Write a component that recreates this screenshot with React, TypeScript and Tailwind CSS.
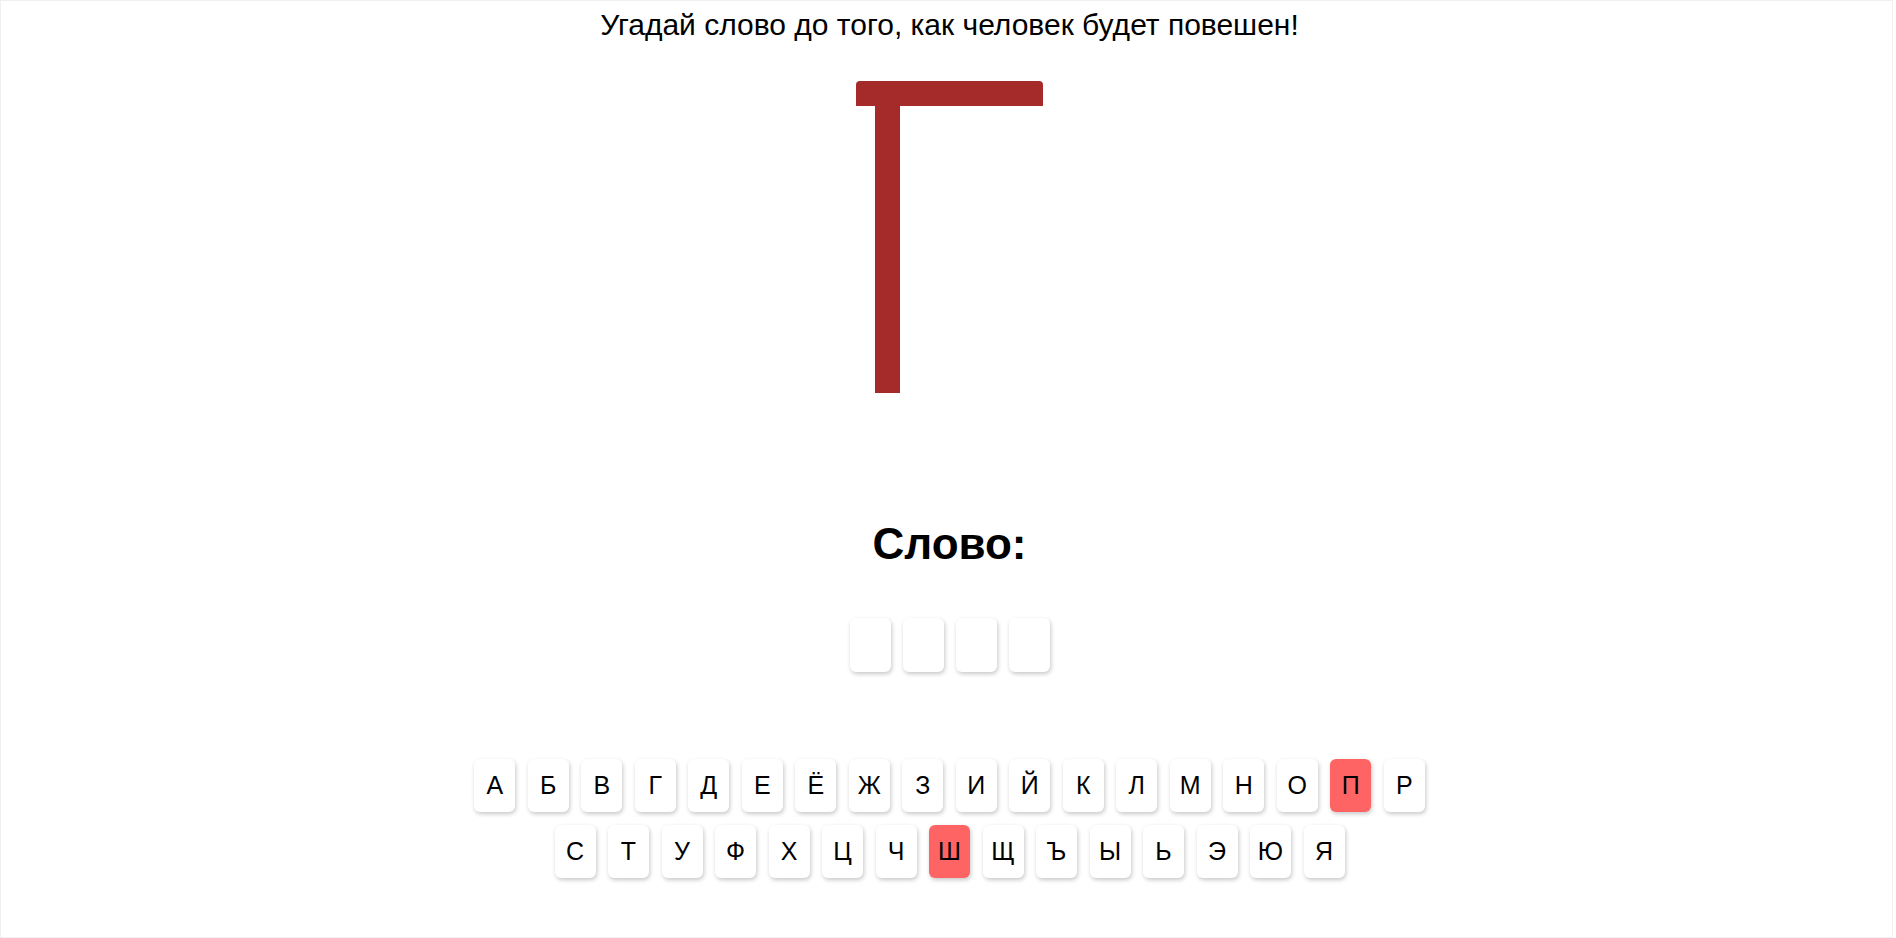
import React, { useState } from 'react';

const ROW_LETTERS = 'АБВГДЕЁЖЗИЙКЛМНОПРСТУФХЦЧШЩЪЫЬЭЮЯ'.split('');

const Gallows = () => (
  <div className="mt-[39px] flex w-[187px] flex-col">
    <div className="h-[25px] w-full rounded-t-[4px] bg-[#a52a2a]" />
    <div className="ml-[19px] h-[287px] w-[25px] bg-[#a52a2a]" />
  </div>
);

const Hangman = () => {
  const [word] = useState<string[]>(['', '', '', '']);
  const [wrong] = useState<string[]>(['П', 'Ш']);

  return (
    <div className="h-[938px] w-[1893px] border border-[#f0f0f0] bg-white font-['Liberation_Sans',Arial,sans-serif] text-black">
      <div className="flex flex-col items-center pl-[6px]">
        <p className="pt-[7px] text-[30px] leading-[34px]">
          Угадай слово до того, как человек будет повешен!
        </p>

        <Gallows />

        <h2 className="mt-[126px] text-[44px] font-bold leading-[50px]">Слово:</h2>

        <div className="mt-[49px] flex gap-[12px]">
          {word.map((ch, i) => (
            <div
              key={i}
              className="flex h-[54px] w-[41px] items-center justify-center rounded-[6px] bg-white text-[25px] shadow-[1px_2px_4px_rgba(0,0,0,0.22)]"
            >
              {ch}
            </div>
          ))}
        </div>

        <div className="mt-[87px] flex max-w-[1000px] flex-wrap justify-center gap-x-[12.5px] gap-y-[13px]">
          {ROW_LETTERS.map(letter => (
            <button
              key={letter}
              className={
                wrong.includes(letter)
                  ? 'flex h-[53px] w-[41px] items-center justify-center rounded-[6px] bg-[#ff6464] text-[25px] leading-none text-black shadow-[1px_2px_4px_rgba(0,0,0,0.22)]'
                  : 'flex h-[53px] w-[41px] items-center justify-center rounded-[6px] bg-white text-[25px] leading-none text-black shadow-[1px_2px_4px_rgba(0,0,0,0.22)]'
              }
            >
              {letter}
            </button>
          ))}
        </div>
      </div>
    </div>
  );
};

export default function App() {
  return <Hangman />;
}
